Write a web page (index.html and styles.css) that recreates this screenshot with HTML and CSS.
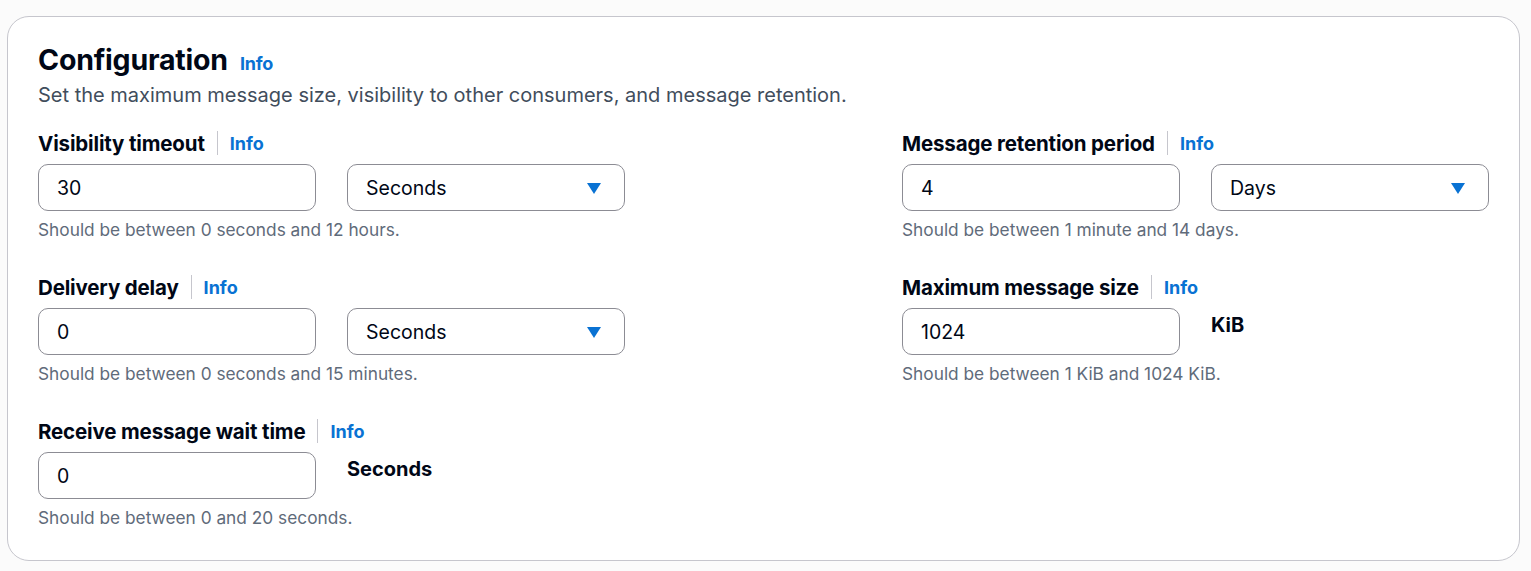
FILE: index.html
```html
<!DOCTYPE html>
<html lang="en">
<head>
<meta charset="utf-8">
<title>Configuration</title>
<link rel="stylesheet" href="styles.css">
</head>
<body>
<section class="card">
  <header class="head">
    <h2 class="title">Configuration <a class="info info-lg" href="#">Info</a></h2>
    <p class="desc">Set the maximum message size, visibility to other consumers, and message retention.</p>
  </header>
  <div class="grid">
    <div class="col">
      <div class="field">
        <div class="label-row"><span class="label">Visibility timeout</span><span class="sep"></span><a class="info" href="#">Info</a></div>
        <div class="controls">
          <div class="input">30</div>
          <div class="select"><span>Seconds</span><svg class="caret" viewBox="0 0 16 16" width="16" height="16"><path d="M1 3h14L8 14z" fill="#0972d3"/></svg></div>
        </div>
        <div class="hint">Should be between 0 seconds and 12 hours.</div>
      </div>
      <div class="field">
        <div class="label-row"><span class="label">Delivery delay</span><span class="sep"></span><a class="info" href="#">Info</a></div>
        <div class="controls">
          <div class="input">0</div>
          <div class="select"><span>Seconds</span><svg class="caret" viewBox="0 0 16 16" width="16" height="16"><path d="M1 3h14L8 14z" fill="#0972d3"/></svg></div>
        </div>
        <div class="hint">Should be between 0 seconds and 15 minutes.</div>
      </div>
      <div class="field">
        <div class="label-row"><span class="label">Receive message wait time</span><span class="sep"></span><a class="info" href="#">Info</a></div>
        <div class="controls">
          <div class="input">0</div>
          <div class="unit">Seconds</div>
        </div>
        <div class="hint">Should be between 0 and 20 seconds.</div>
      </div>
    </div>
    <div class="col">
      <div class="field">
        <div class="label-row"><span class="label">Message retention period</span><span class="sep"></span><a class="info" href="#">Info</a></div>
        <div class="controls">
          <div class="input">4</div>
          <div class="select"><span>Days</span><svg class="caret" viewBox="0 0 16 16" width="16" height="16"><path d="M1 3h14L8 14z" fill="#0972d3"/></svg></div>
        </div>
        <div class="hint">Should be between 1 minute and 14 days.</div>
      </div>
      <div class="field">
        <div class="label-row"><span class="label">Maximum message size</span><span class="sep"></span><a class="info" href="#">Info</a></div>
        <div class="controls">
          <div class="input">1024</div>
          <div class="unit">KiB</div>
        </div>
        <div class="hint">Should be between 1 KiB and 1024 KiB.</div>
      </div>
    </div>
  </div>
</section>
</body>
</html>
```

FILE: styles.css
```css
* { box-sizing: border-box; }
html, body { margin: 0; padding: 0; }
body {
  background: #fbfbfb;
  font-family: Inter, "Open Sans", Arial, sans-serif;
  color: #000716;
  padding: 16px 12px 0 7px;
}
.card {
  width: 1513px;
  height: 545px;
  background: #ffffff;
  border: 1px solid #c6c6cd;
  border-radius: 22px;
  padding: 27px 30px 0 30px;
}
.head { margin-bottom: 22px; }
.title {
  margin: 0;
  font-size: 28.5px;
  line-height: 32px;
  font-weight: 700;
  letter-spacing: -0.2px;
  display: flex;
  align-items: baseline;
  gap: 12px;
}
.desc {
  margin: 2px 0 0 0;
  font-size: 20px;
  line-height: 26px;
  color: #414d5c;
}
.grid {
  display: grid;
  grid-template-columns: 864px 1fr;
}
.col { display: flex; flex-direction: column; gap: 33px; }
.field { display: flex; flex-direction: column; }
.label-row {
  display: flex;
  align-items: center;
  height: 26px;
  margin-bottom: 8px;
}
.label { font-size: 20.5px; font-weight: 700; letter-spacing: -0.15px; }
.sep {
  width: 1px;
  height: 24px;
  background: #c6c6cd;
  margin: 0 12px;
}
.info {
  color: #0972d3;
  font-weight: 700;
  font-size: 18px;
  text-decoration: none;
}
.info-lg { font-size: 18px; }
.controls { display: flex; gap: 31px; align-items: flex-start; }
.input, .select {
  width: 278px;
  height: 47px;
  border: 1px solid #8c8c94;
  border-radius: 10px;
  padding: 0 18px;
  display: flex;
  align-items: center;
  font-size: 19.5px;
}
.select { justify-content: space-between; padding-right: 22px; }
.caret { display: block; }
.unit { font-size: 20px; font-weight: 700; padding-top: 5px; }
.hint {
  margin-top: 8px;
  font-size: 17.3px;
  line-height: 22px;
  color: #5f6b7a;
}
```
